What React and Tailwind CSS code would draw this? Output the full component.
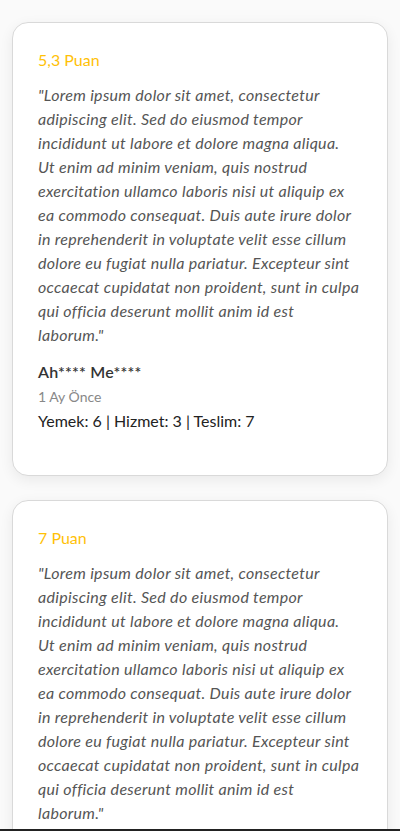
import React from "react";

const lines = [
  "\"Lorem ipsum dolor sit amet, consectetur",
  "adipiscing elit. Sed do eiusmod tempor",
  "incididunt ut labore et dolore magna aliqua.",
  "Ut enim ad minim veniam, quis nostrud",
  "exercitation ullamco laboris nisi ut aliquip ex",
  "ea commodo consequat. Duis aute irure dolor",
  "in reprehenderit in voluptate velit esse cillum",
  "dolore eu fugiat nulla pariatur. Excepteur sint",
  "occaecat cupidatat non proident, sunt in culpa",
  "qui officia deserunt mollit anim id est",
  "laborum.\"",
];

const reviews = [
  { score: "5,3 Puan", name: "Ah**** Me****", time: "1 Ay Önce", detail: "Yemek: 6 | Hizmet: 3 | Teslim: 7" },
  { score: "7 Puan", name: "Ah**** Me****", time: "1 Ay Önce", detail: "Yemek: 6 | Hizmet: 3 | Teslim: 7" },
];

function Card({ r }) {
  return (
    <div className="mx-3 rounded-[16px] border border-[#d9d9d9] bg-white px-[25px] pt-[26px] pb-[42px] shadow-[0_4px_14px_rgba(0,0,0,0.07)]">
      <div className="text-[16px] leading-[22px] text-[#ffc107]">{r.score}</div>
      <p className="mt-[12px] whitespace-nowrap text-[16px] italic leading-[24px] tracking-[0.3px] text-[#555]">
        {lines.map((l, i) => (
          <React.Fragment key={i}>
            {l}
            {i < lines.length - 1 && <br />}
          </React.Fragment>
        ))}
      </p>
      <div className="mt-[13px] text-[16px] font-semibold leading-[24px] tracking-[0.2px] text-[#333]">{r.name}</div>
      <div className="mt-[2px] text-[14px] leading-[22px] text-[#888]">{r.time}</div>
      <div className="mt-[1px] text-[16px] leading-[24px] text-[#222]">{r.detail}</div>
    </div>
  );
}

export default function App() {
  return (
    <div className="min-h-[831px] bg-[#fafafa] pt-[22px] pb-[30px] font-['Lato',sans-serif]">
      <div className="flex flex-col gap-[24px]">
        {reviews.map((r, i) => (
          <Card key={i} r={r} />
        ))}
      </div>
      <div className="fixed bottom-0 left-0 right-0 h-[2px] bg-[#222]" />
    </div>
  );
}
